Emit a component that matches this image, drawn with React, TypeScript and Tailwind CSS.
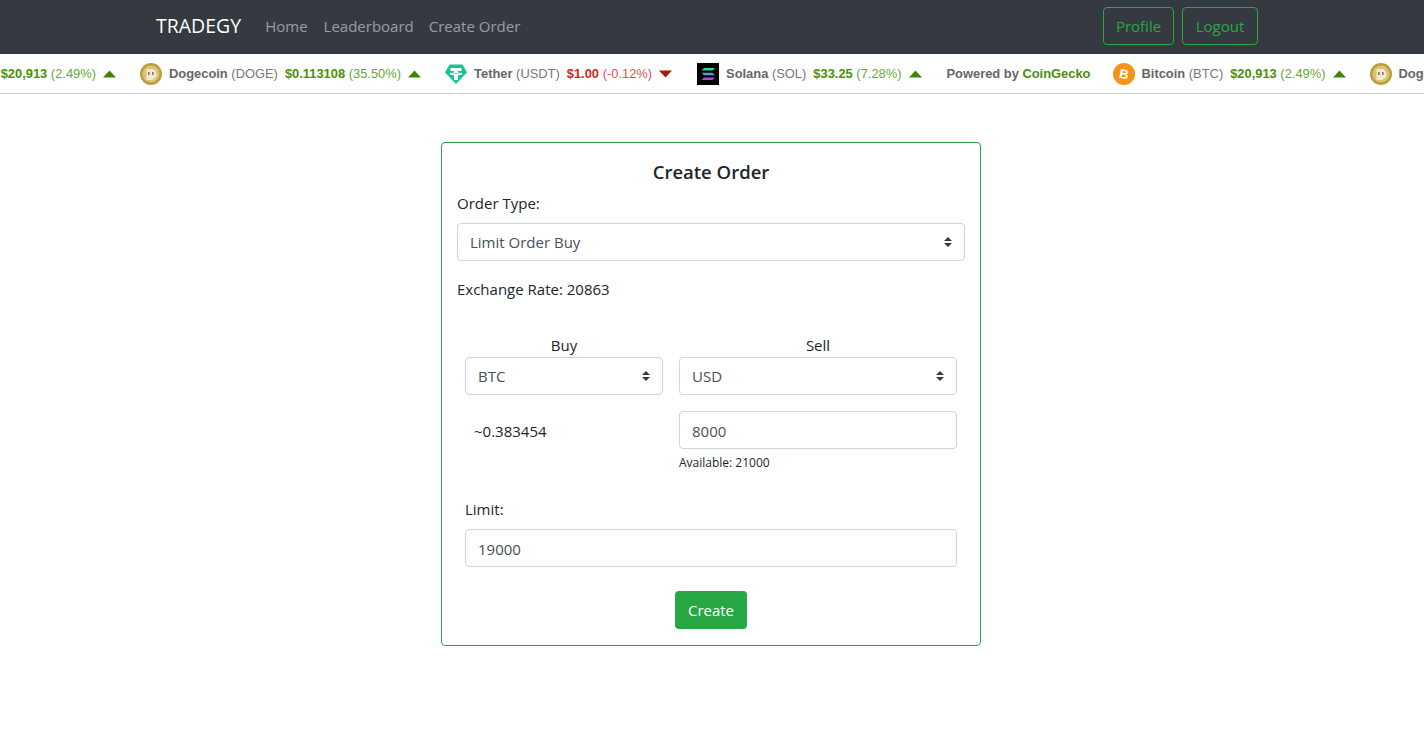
import React from "react";

const ui = "font-['Open_Sans','Noto_Sans',sans-serif]";

function Up() {
  return (
    <svg width="13" height="8" viewBox="0 0 13 8" className="shrink-0">
      <path d="M6.5 0.5 L13 7.5 H0 Z" fill="#3f8600" />
    </svg>
  );
}
function Down() {
  return (
    <svg width="13" height="8" viewBox="0 0 13 8" className="shrink-0">
      <path d="M0 0.5 H13 L6.5 7.5 Z" fill="#a61c00" />
    </svg>
  );
}

function Btc() {
  return (
    <svg width="22" height="22" viewBox="0 0 22 22" className="shrink-0">
      <circle cx="11" cy="11" r="11" fill="#f7931a" />
      <text x="11" y="15.5" textAnchor="middle" fontSize="13" fontWeight="700" fill="#fff" fontFamily="Liberation Sans" transform="rotate(12 11 11)">B</text>
    </svg>
  );
}
function Doge() {
  return (
    <svg width="22" height="22" viewBox="0 0 22 22" className="shrink-0">
      <circle cx="11" cy="11" r="11" fill="#bb9f3a" />
      <circle cx="11" cy="11" r="8.5" fill="#d9c27a" />
      <path d="M6.5 6 H13 Q17 8 16.5 13 Q14.5 17 10.5 17 H6.5 Z" fill="#f1e9d0" />
      <rect x="8" y="9" width="1.6" height="3" fill="#8a7a45" />
      <rect x="12" y="9" width="1.6" height="3" fill="#8a7a45" />
    </svg>
  );
}
function Usdt() {
  return (
    <svg width="22" height="22" viewBox="0 0 22 22" className="shrink-0">
      <path d="M4.5 1.5 H17.5 L22 9.5 L11 21 L0 9.5 Z" fill="#15c39a" />
      <path d="M5.5 5 H16.5 V8 H13 V9.4 C15.5 9.6 17.5 10.1 17.5 10.8 C17.5 11.5 15.5 12 13 12.2 V17 H9 V12.2 C6.5 12 4.5 11.5 4.5 10.8 C4.5 10.1 6.5 9.6 9 9.4 V8 H5.5 Z" fill="#fff" />
      <path d="M6.5 10.8 C8 10.3 14 10.3 15.5 10.8 C14 11.3 8 11.3 6.5 10.8 Z" fill="#15c39a" />
    </svg>
  );
}
function Sol() {
  return (
    <svg width="22" height="22" viewBox="0 0 22 22" className="shrink-0">
      <rect width="22" height="22" fill="#000" />
      <path d="M7 5 H18 L15.5 7.5 H4.5 Z" fill="#2fd6a8" />
      <path d="M4.5 9.7 H15.5 L18 12.2 H7 Z" fill="#5f9bd0" />
      <path d="M7 14.5 H18 L15.5 17 H4.5 Z" fill="#a24be8" />
    </svg>
  );
}

function Coin({ icon, name, sym, price, pct, down, mr = "mr-6" }: { icon: React.ReactNode; name: string; sym: string; price: string; pct: string; down?: boolean; mr?: string }) {
  return (
    <div className={"flex items-center shrink-0 " + mr}>
      {icon}
      <span className="ml-[7px] text-[#666]"><b>{name}</b> <span className="text-[#777]">({sym})</span></span>
      <span className={"ml-[7px] " + (down ? "text-[#d9534a]" : "text-[#69a632]")}>
        <b className={down ? "text-[#cc2a20]" : "text-[#4b8f0c]"}>{price}</b> ({pct})
      </span>
      <span className="ml-[7px] flex">{down ? <Down /> : <Up />}</span>
    </div>
  );
}

function Ticker() {
  const items = (
    <>
      <Coin icon={<Btc />} name="Bitcoin" sym="BTC" price="$20,913" pct="2.49%" />
      <Coin icon={<Doge />} name="Dogecoin" sym="DOGE" price="$0.113108" pct="35.50%" />
      <Coin icon={<Usdt />} name="Tether" sym="USDT" price="$1.00" pct="-0.12%" down mr="mr-[25px]" />
      <Coin icon={<Sol />} name="Solana" sym="SOL" price="$33.25" pct="7.28%" mr="mr-[25px]" />
      <div className="shrink-0 mr-[22px] text-[#666] font-bold">
        Powered by <span className="text-[#4b8f0c]">CoinGecko</span>
      </div>
    </>
  );
  return (
    <div className="h-10 border-b border-[#ccc] bg-white overflow-hidden flex items-center font-['Liberation_Sans',sans-serif] text-[12.9px] whitespace-nowrap">
      <div className="flex items-center shrink-0 ml-[-117px]">
        {items}
        {items}
      </div>
    </div>
  );
}

function Caret() {
  return (
    <svg width="8" height="10" viewBox="0 0 8 10" className="absolute right-[13px] top-1/2 -translate-y-1/2 pointer-events-none">
      <path d="M4 0 L8 4 H0 Z M0 6 H8 L4 10 Z" fill="#343a40" />
    </svg>
  );
}

function Select({ value, className = "" }: { value: string; className?: string }) {
  return (
    <div className={"relative " + className}>
      <select defaultValue={value} className="appearance-none w-full h-[38px] border border-[#ced4da] rounded bg-white pl-3 pr-6 text-[15px] text-[#495057] outline-none">
        <option>{value}</option>
      </select>
      <Caret />
    </div>
  );
}

function Input({ value }: { value: string }) {
  return (
    <input
      defaultValue={value}
      className="block w-full h-[38px] border border-[#ced4da] rounded bg-white px-3 pt-0.5 text-[15px] text-[#495057] outline-none"
    />
  );
}

export default function App() {
  return (
    <div className={"min-h-[740px] bg-white text-[#212529] " + ui}>
      <nav className="h-[54px] bg-[#343a40] flex items-center pb-[2px] pl-[156px] pr-[166px]">
        <span className="text-[19.5px] text-white mr-4">TRADEGY</span>
        <a className="text-[15px] text-white/50 px-2">Home</a>
        <a className="text-[15px] text-white/50 pl-2 pr-[7px]">Leaderboard</a>
        <a className="text-[15px] text-white/50 px-2">Create Order</a>
        <div className="ml-auto flex gap-2">
          <button className="h-[38px] w-[71px] border border-[#28a745] rounded text-[#28a745] text-[15px]">Profile</button>
          <button className="h-[38px] w-[76px] border border-[#28a745] rounded text-[#28a745] text-[15px]">Logout</button>
        </div>
      </nav>
      <Ticker />
      <div className="flex justify-center pt-12">
        <div className="w-[540px] h-[504px] mr-[2px] border border-[#28a745] rounded px-[15px] pt-[17px]">
          <h2 className="text-[18.5px] font-semibold text-center leading-6 mb-[7px]">Create Order</h2>
          <label className="block text-[15px] leading-6 mb-2">Order Type:</label>
          <Select value="Limit Order Buy" />
          <p className="text-[15px] leading-6 mt-4">Exchange Rate: 20863</p>
          <div className="px-2 mt-[32px]">
            <div className="flex gap-4">
              <div className="w-[198px]">
                <div className="text-[15px] leading-6 text-center">Buy</div>
                <Select value="BTC" />
              </div>
              <div className="w-[278px]">
                <div className="text-[15px] leading-6 text-center">Sell</div>
                <Select value="USD" />
              </div>
            </div>
            <div className="flex gap-4 mt-4">
              <div className="w-[198px] h-[38px] flex items-center pl-[9px] pt-0.5 text-[15px]">~0.383454</div>
              <div className="w-[278px]">
                <Input value="8000" />
                <div className="text-xs leading-[18px] mt-[5px]">Available: 21000</div>
              </div>
            </div>
            <label className="block text-[15px] leading-6 mt-[25px] mb-2">Limit:</label>
            <Input value="19000" />
            <div className="flex justify-center mt-6">
              <button className="h-[38px] w-[72px] bg-[#28a745] text-white rounded text-[15px]">Create</button>
            </div>
          </div>
        </div>
      </div>
    </div>
  );
}
